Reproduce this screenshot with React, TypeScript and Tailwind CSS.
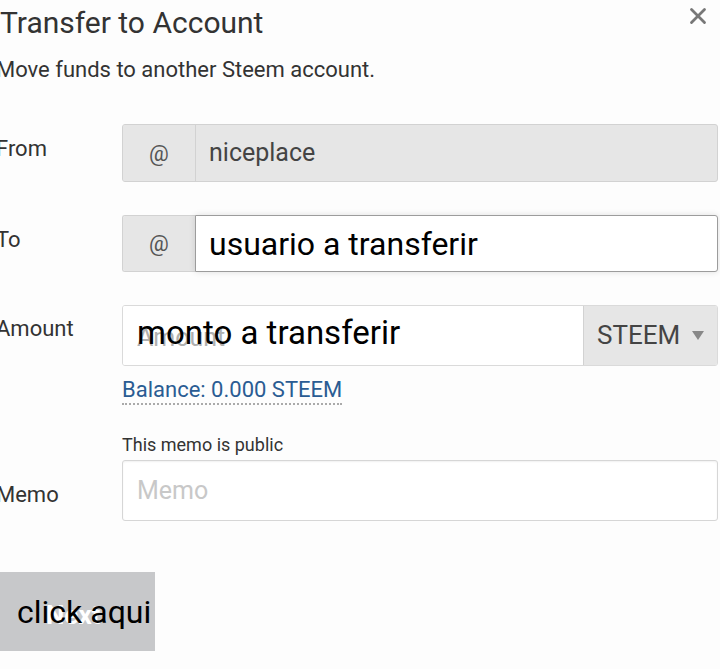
import { X } from 'lucide-react';

const font = { fontFamily: 'Roboto, "Noto Sans", sans-serif' };

const Label = ({ text, pad }: { text: string; pad: string }) => (
  <div className={`${pad} text-[22px] leading-[26px] text-[#333]`}>{text}</div>
);

const Addon = () => (
  <div className="w-[72px] shrink-0 flex items-center justify-center bg-[#e6e6e6] text-[22px] text-[#555]">
    @
  </div>
);

export default function App() {
  return (
    <div className="relative min-h-screen overflow-hidden bg-[#fdfdfd]" style={font}>
      <button className="absolute right-[9px] top-[3px] text-[#777]">
        <X className="w-[26px] h-[26px]" strokeWidth={2.6} />
      </button>

      <div className="-ml-1 w-[722px]">
        <h1 className="mt-[6px] pl-1 text-[30px] leading-[34px] text-[#333]">Transfer to Account</h1>
        <p className="mt-[18px] text-[22px] leading-[24px] text-[#333]">Move funds to another Steem account.</p>

        {/* From */}
        <div className="mt-[42px] grid grid-cols-[126px_1fr]">
          <Label text="From" pad="pt-[12px]" />
          <div className="h-[58px] flex rounded-[3px] border border-[#d2d2d2] bg-[#e6e6e6] overflow-hidden">
            <Addon />
            <div className="flex-1 flex items-center border-l border-[#d2d2d2] pl-[13px] text-[25px] text-[#444]">niceplace</div>
          </div>
        </div>

        {/* To */}
        <div className="mt-[33px] grid grid-cols-[126px_1fr]">
          <Label text="To" pad="pt-[12px]" />
          <div className="h-[57px] flex">
            <div className="flex rounded-l-[3px] border border-r-0 border-[#d2d2d2] overflow-hidden">
              <Addon />
            </div>
            <div className="flex-1 flex items-center rounded-r-[3px] border border-[#9c9c9c] bg-white pl-[13px] text-[32px] text-black shadow-[0_0_6px_rgba(0,0,0,0.12)]">
              usuario a transferir
            </div>
          </div>
        </div>

        {/* Amount */}
        <div className="mt-[33px] grid grid-cols-[126px_1fr]">
          <Label text="Amount" pad="pt-[11px]" />
          <div>
            <div className="h-[61px] flex rounded-[3px] border border-[#dadada] overflow-hidden">
              <div className="relative flex-1 flex items-center bg-white pb-[5px]">
                <span className="absolute left-[14px] top-[13px] text-[25px] text-[#b0b0b0]">Amount</span>
                <span className="relative pl-[14px] text-[33px] text-black">monto a transferir</span>
              </div>
              <div className="w-[134px] flex items-center gap-[12px] border-l border-[#d2d2d2] bg-[#e6e6e6] pl-[13px] text-[26px] text-[#444]">
                STEEM
                <svg width="12" height="9" viewBox="0 0 12 9">
                  <path d="M0 0h12L6 9z" fill="#888" />
                </svg>
              </div>
            </div>
            <div className="mt-[11px]">
              <span className="border-b-2 border-dotted border-[#aaa] pb-[1px] text-[22px] leading-[26px] text-[#2a5c93]">
                Balance: 0.000 STEEM
              </span>
            </div>
          </div>
        </div>

        {/* Memo */}
        <div className="mt-[30px] grid grid-cols-[126px_1fr]">
          <Label text="Memo" pad="pt-[48px]" />
          <div>
            <div className="text-[18px] leading-[22px] text-[#333]">This memo is public</div>
            <div className="mt-[4px] h-[61px] flex items-center rounded-[3px] border border-[#d6d6d6] bg-white pl-[14px] text-[25px] text-[#c8c8c8] shadow-[inset_0_1px_2px_rgba(0,0,0,0.06)]">
              Memo
            </div>
          </div>
        </div>
      </div>

      <button className="relative mt-[51px] w-[155px] h-[79px] flex items-center bg-[#c7c8ca]">
        <span className="absolute left-[46px] top-[24px] text-[26px] font-bold text-white">Next</span>
        <span className="relative pl-[17px] text-[32px] text-black">click aqui</span>
      </button>
    </div>
  );
}
